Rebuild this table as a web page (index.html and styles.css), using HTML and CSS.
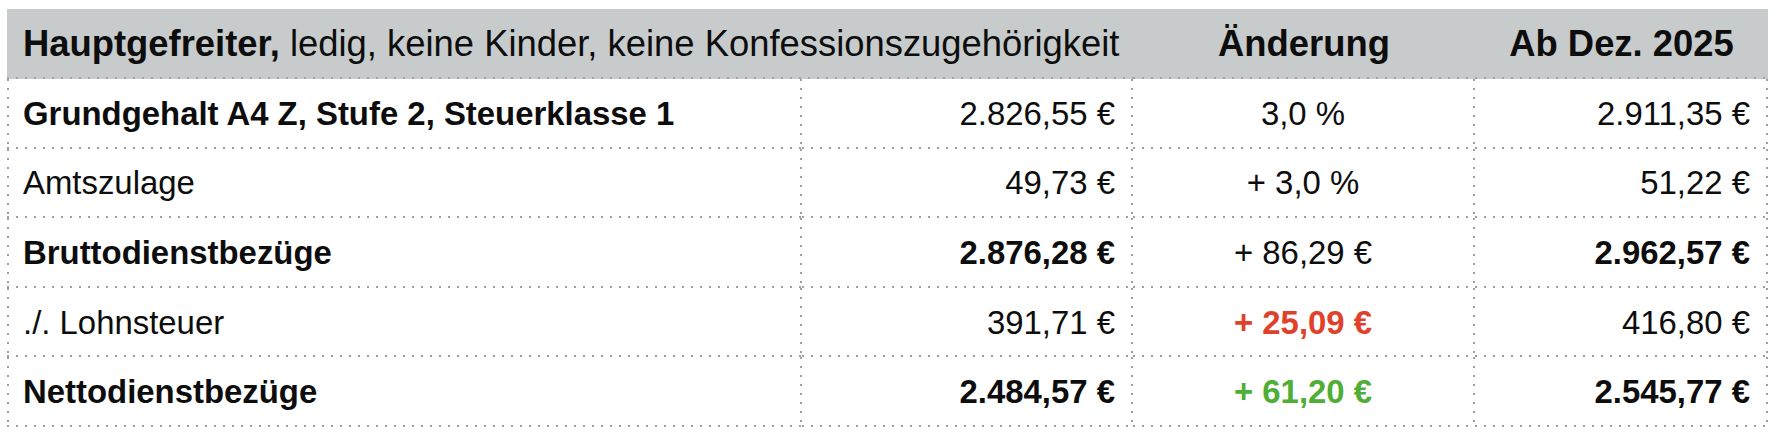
FILE: index.html
```html
<!DOCTYPE html>
<html lang="de">
<head>
<meta charset="utf-8">
<title>Hauptgefreiter Besoldung</title>
<link rel="stylesheet" href="styles.css">
</head>
<body>
<table class="pay">
  <colgroup>
    <col class="c-label">
    <col class="c-now">
    <col class="c-diff">
    <col class="c-new">
  </colgroup>
  <thead>
    <tr class="head">
      <th class="h-title" colspan="2"><b>Hauptgefreiter,</b> ledig, keine Kinder, keine Konfessionszugehörigkeit</th>
      <th class="h-col">Änderung</th>
      <th class="h-col">Ab Dez. 2025</th>
    </tr>
  </thead>
  <tbody>
    <tr class="bold-label">
      <td class="label">Grundgehalt A4 Z, Stufe 2, Steuerklasse 1</td>
      <td class="num">2.826,55 €</td>
      <td class="diff">3,0 %</td>
      <td class="num">2.911,35 €</td>
    </tr>
    <tr>
      <td class="label">Amtszulage</td>
      <td class="num">49,73 €</td>
      <td class="diff">+ 3,0 %</td>
      <td class="num">51,22 €</td>
    </tr>
    <tr class="bold">
      <td class="label">Bruttodienstbezüge</td>
      <td class="num">2.876,28 €</td>
      <td class="diff plain">+ 86,29 €</td>
      <td class="num">2.962,57 €</td>
    </tr>
    <tr>
      <td class="label">./. Lohnsteuer</td>
      <td class="num">391,71 €</td>
      <td class="diff up">+ 25,09 €</td>
      <td class="num">416,80 €</td>
    </tr>
    <tr class="bold">
      <td class="label">Nettodienstbezüge</td>
      <td class="num">2.484,57 €</td>
      <td class="diff good">+ 61,20 €</td>
      <td class="num">2.545,77 €</td>
    </tr>
  </tbody>
</table>
</body>
</html>
```

FILE: styles.css
```css
html, body {
  margin: 0;
  padding: 0;
  background: #ffffff;
}

body {
  font-family: "Liberation Sans", Arial, Helvetica, sans-serif;
  color: #0d0d0d;
}

.pay {
  margin: 9px 0 0 7px;
  width: 1761px;
  border-collapse: separate;
  border-spacing: 0;
  table-layout: fixed;
}

.c-label { width: 795px; }
.c-now { width: 331px; }
.c-diff { width: 342px; }
.c-new { width: 293px; }

/* header */
.head th {
  height: 70px;
  padding: 0;
  background-color: #c8cbcb;
  background-image: linear-gradient(to right, #a3a5a5 2px, transparent 2px);
  background-size: 9px 2px;
  background-repeat: repeat-x;
  background-position: left bottom;
  font-size: 36.4px;
  vertical-align: middle;
  white-space: nowrap;
}

.h-title {
  text-align: left;
  font-weight: normal;
  padding-left: 16px !important;
}

.h-title b {
  font-weight: bold;
}

.h-col {
  text-align: center;
  font-weight: bold;
}

/* body cells with dotted grid */
.pay td {
  height: 69.6px;
  padding: 0 18px 0 16px;
  font-size: 32.9px;
  vertical-align: middle;
  white-space: nowrap;
  background-image:
    linear-gradient(to right, #a0a0a0 2px, transparent 2px),
    linear-gradient(to bottom, #a0a0a0 2px, transparent 2px);
  background-size: 9px 2px, 2px 9px;
  background-repeat: repeat-x, repeat-y;
  background-position: left bottom, right top;
}

.pay td.label {
  background-image:
    linear-gradient(to right, #a0a0a0 2px, transparent 2px),
    linear-gradient(to bottom, #a0a0a0 2px, transparent 2px),
    linear-gradient(to bottom, #a0a0a0 2px, transparent 2px);
  background-size: 9px 2px, 2px 9px, 2px 9px;
  background-repeat: repeat-x, repeat-y, repeat-y;
  background-position: left bottom, right top, left top;
  text-align: left;
}

.num {
  text-align: right;
}

.diff {
  text-align: center;
}

.bold-label .label {
  font-weight: bold;
}

.bold td {
  font-weight: bold;
}

.bold td.plain {
  font-weight: normal;
}

.up {
  color: #e0412a;
  font-weight: bold;
}

.good {
  color: #4fae35;
  font-weight: bold;
}
```
